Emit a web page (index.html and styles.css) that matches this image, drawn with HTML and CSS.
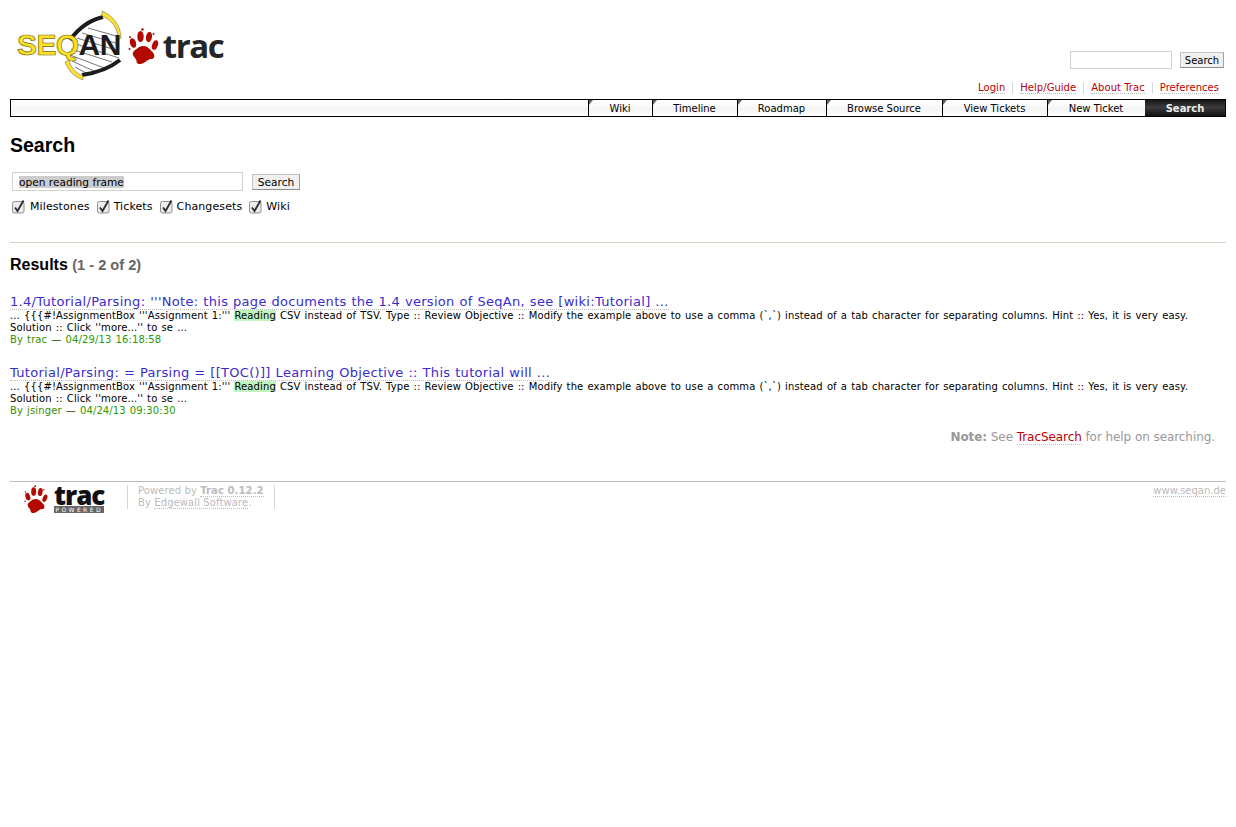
FILE: index.html
```html
<!DOCTYPE html>
<html lang="en">

<head>
    <meta charset="UTF-8">
    <meta name="viewport" content="width=device-width, initial-scale=1.0">
    <title>Search - SeqAn</title>
    <link rel="stylesheet" href="styles.css">
</head>

<body>
    <svg class="defs" width="0" height="0">
        <symbol id="paw" viewBox="0 0 30 36">
            <g fill="#b30a00">
                <path d="M15 18c4 0 6 3 9 6 3 3 2 7-1 7-3 0-4 2-8 4-4 2-7 1-7-2 0-2-2-3-3-5-2-3 0-5 3-7 2-2 4-3 7-3z"/>
                <ellipse cx="4.500" cy="15" rx="3" ry="5" transform="rotate(-18 4.500 15)"/>
                <ellipse cx="12" cy="8.500" rx="3.200" ry="5.500"/>
                <ellipse cx="20.500" cy="9" rx="3" ry="5.200" transform="rotate(10 20.500 9)"/>
                <ellipse cx="26.500" cy="17" rx="2.800" ry="5" transform="rotate(20 26.500 17)"/>
                <circle cx="14" cy="1.500" r="1.200"/>
                <circle cx="25" cy="6" r="1"/>
                <circle cx="1.500" cy="9" r="1"/>
                <circle cx="1" cy="21" r="1"/>
            </g>
        </symbol>
        <symbol id="tick" viewBox="0 0 14 15">
            <rect x="0.500" y="2.500" width="11.500" height="11.500" rx="2" fill="#ececec" stroke="#8f8f8f"/>
            <path d="M3 8.500l2.500 3.500L11.500 1.500" fill="none" stroke="#2b2b2b" stroke-width="1.800"/>
        </symbol>
    </svg>

    <div class="banner">
        <a class="logo" href="#">
            <svg class="logo-helix" width="62" height="72" viewBox="0 0 62 72">
                <path d="M8 30C16 19 28 10 41 7L58 28 58 50C48 58 34 63 20 65 12 56 8 44 8 30z" fill="#fff"/>
                <path d="M26 18L54 26M20 23L57 34M15 28L57 41M11 33L57 48M9 39L50 52M8 45L42 58M10 51L34 62M13 57L26 64" stroke="#777" stroke-width="1"/>
                <path d="M8 30C16 19 28 10 41 7" fill="none" stroke="#1c1c1c" stroke-width="4"/>
                <path d="M58 50C48 58 34 63 20 65" fill="none" stroke="#1c1c1c" stroke-width="4"/>
                <path d="M40 1c10 4 19 14 19 27l-3 2C56 18 50 10 40 6z" fill="#fde02a" stroke="#777" stroke-width="0.600"/>
                <path d="M3 52c3 8 9 15 18 18l0-4C14 63 9 58 7 50z" fill="#fde02a" stroke="#777" stroke-width="0.600"/>
            </svg>
            <span class="logo-seq">SEQ</span><span class="logo-an">AN</span>
            <svg class="logo-paw" width="31" height="36"><use href="#paw"/></svg>
            <span class="logo-trac">trac</span>
        </a>
        <div class="banner-right">
            <form class="top-search">
                <input type="text" class="top-input">
                <button type="button" class="btn btn-top">Search</button>
            </form>
            <ul class="metanav">
                <li><a href="#">Login</a></li>
                <li><a href="#">Help/Guide</a></li>
                <li><a href="#">About Trac</a></li>
                <li><a href="#">Preferences</a></li>
            </ul>
        </div>
    </div>

    <ul class="mainnav">
        <li class="w-wiki"><a href="#">Wiki</a></li>
        <li class="w-timeline"><a href="#">Timeline</a></li>
        <li class="w-roadmap"><a href="#">Roadmap</a></li>
        <li class="w-browse"><a href="#">Browse Source</a></li>
        <li class="w-view"><a href="#">View Tickets</a></li>
        <li class="w-new"><a href="#">New Ticket</a></li>
        <li class="w-search active"><a href="#">Search</a></li>
    </ul>

    <h1>Search</h1>

    <form class="search-form">
        <div class="query-row">
            <div class="query-box"><span class="query-sel">open reading frame</span></div>
            <button type="button" class="btn btn-form">Search</button>
        </div>
        <div class="filters">
            <label><svg class="tick" width="14" height="15"><use href="#tick"/></svg>Milestones</label>
            <label><svg class="tick" width="14" height="15"><use href="#tick"/></svg>Tickets</label>
            <label><svg class="tick" width="14" height="15"><use href="#tick"/></svg>Changesets</label>
            <label><svg class="tick" width="14" height="15"><use href="#tick"/></svg>Wiki</label>
        </div>
    </form>

    <hr class="rule">

    <h2>Results <span class="numresults">(1 - 2 of 2)</span></h2>

    <dl class="results">
        <dt><a href="#">1.4/Tutorial/Parsing: '''Note: this page documents the 1.4 version of SeqAn, see [wiki:Tutorial] ...</a></dt>
        <dd class="excerpt">... {{{#!AssignmentBox '''Assignment 1:''' <span class="match">Reading</span> CSV instead of TSV. Type :: Review Objective :: Modify the example above to use a comma (`,`) instead of a tab character for separating columns. Hint :: Yes, it is very easy.<br>Solution :: Click ''more...'' to se ...</dd>
        <dd class="meta">By trac <span class="dash">—</span> <span class="date">04/29/13 16:18:58</span></dd>

        <dt><a href="#">Tutorial/Parsing: = Parsing = [[TOC()]] Learning Objective :: This tutorial will ...</a></dt>
        <dd class="excerpt">... {{{#!AssignmentBox '''Assignment 1:''' <span class="match">Reading</span> CSV instead of TSV. Type :: Review Objective :: Modify the example above to use a comma (`,`) instead of a tab character for separating columns. Hint :: Yes, it is very easy.<br>Solution :: Click ''more...'' to se ...</dd>
        <dd class="meta">By jsinger <span class="dash">—</span> <span class="date">04/24/13 09:30:30</span></dd>
    </dl>

    <p class="help"><strong>Note:</strong> See <a href="#">TracSearch</a> for help on searching.</p>

    <div class="footer">
        <a class="footer-logo" href="#">
            <svg class="footer-paw" width="24" height="28"><use href="#paw"/></svg>
            <span class="footer-mark">
                <span class="footer-trac">trac</span>
                <span class="footer-powered">POWERED</span>
            </span>
        </a>
        <p class="powered">Powered by <a href="#"><strong>Trac 0.12.2</strong></a><br>By <a href="#">Edgewall Software</a>.</p>
        <p class="site"><a href="#">www.seqan.de</a></p>
    </div>
</body>

</html>
```

FILE: styles.css
```css
body {
    margin: 0;
    padding: 0 10px;
    background: #fff;
    color: #000;
    font-family: "DejaVu Sans", Verdana, sans-serif;
    font-size: 11px;
}

a {
    text-decoration: none;
}

.defs {
    display: block;
    height: 0;
}

/* banner */
.banner {
    display: flex;
    justify-content: space-between;
    height: 99px;
}

.logo {
    position: relative;
    display: flex;
    align-items: center;
    height: 70px;
    margin: 10px 0 0 7px;
    font-family: "Liberation Sans", Arial, sans-serif;
}

.logo-helix {
    position: absolute;
    left: 45px;
    top: 0;
}

.logo-seq,
.logo-an {
    position: relative;
    font-size: 30px;
    font-weight: bold;
    letter-spacing: -0.600px;
}

.logo-seq {
    color: #fde02a;
    -webkit-text-stroke: 0.700px #77700a;
}

.logo-an {
    color: #1c1c1c;
}

.logo-paw {
    position: relative;
    margin-left: 7px;
    top: 1px;
}

.logo-trac {
    margin-left: 4px;
    color: #262626;
    font-family: "Open Sans", sans-serif;
    font-size: 33px;
    font-weight: 700;
    letter-spacing: -1.400px;
}

.banner-right {
    display: flex;
    flex-direction: column;
    align-items: flex-end;
    padding-top: 51px;
}

.top-search {
    display: flex;
    align-items: center;
    gap: 8px;
    margin-right: 2px;
}

.top-input {
    box-sizing: border-box;
    width: 102px;
    height: 18px;
    border: 1px solid #d2d2d2;
    background: #fff;
    padding: 0;
}

.btn {
    box-sizing: border-box;
    height: 16px;
    padding: 0;
    border: 1px solid #c4c4c4;
    border-bottom-color: #8f8f8f;
    border-right-color: #9f9f9f;
    background: #f0f0f0;
    color: #000;
    font-family: "DejaVu Sans", Verdana, sans-serif;
}

.btn-top {
    width: 44px;
    font-size: 10px;
}

.btn-form {
    width: 48px;
    padding-top: 1px;
    font-size: 10.600px;
}

.metanav {
    display: flex;
    margin: 13px 0 0;
    padding: 0;
    list-style: none;
    font-size: 10px;
    line-height: 12px;
    letter-spacing: 0.040px;
}

.metanav li {
    padding: 0 7px;
    border-left: 1px solid #d7d7d7;
}

.metanav li:first-child {
    border-left: none;
}

.metanav a {
    color: #b00;
    border-bottom: 1px dotted #bbb;
}

/* main navigation */
.mainnav {
    display: flex;
    justify-content: flex-end;
    box-sizing: border-box;
    height: 18px;
    margin: 0;
    padding: 0;
    list-style: none;
    border: 1px solid #000;
    background: linear-gradient(to bottom, #fff, #f5f5f5 60%, #fff);
    font-size: 10px;
    line-height: 18px;
}

.mainnav li {
    position: relative;
    box-sizing: border-box;
    padding-right: 1px;
    border-left: 1px solid #000;
    text-align: center;
}

.mainnav li::before {
    content: "";
    position: absolute;
    left: 0;
    top: 0;
    border-top: 5px solid #666;
    border-right: 4px solid transparent;
}

.mainnav a {
    color: #000;
}

.w-wiki { width: 64px; }
.w-timeline { width: 85px; }
.w-roadmap { width: 89px; }
.w-browse { width: 116px; }
.w-view { width: 105px; }
.w-new { width: 98px; }
.w-search { width: 80px; }

.mainnav .active {
    padding-right: 0;
    border-left: none;
    background: linear-gradient(to bottom, #161616, #3c3c3c 45%, #111);
}

.mainnav .active::before {
    display: none;
}

.mainnav .active a {
    color: #eee;
    font-weight: bold;
}

/* search form */
h1 {
    margin: 17px 0 0;
    font-family: "Liberation Sans", Arial, sans-serif;
    font-size: 19.500px;
    line-height: 23px;
}

.search-form {
    margin: 15px 0 0 2px;
}

.query-row {
    display: flex;
    align-items: center;
    gap: 9px;
}

.query-box {
    box-sizing: border-box;
    width: 231px;
    height: 19px;
    padding-left: 6px;
    border: 1px solid #d2d2d2;
    font-size: 10.600px;
    line-height: 19px;
}

.query-sel {
    background: #ccc;
}

.filters {
    display: flex;
    gap: 7px;
    margin-top: 8px;
    line-height: 15px;
    letter-spacing: 0.100px;
}

.filters label {
    display: flex;
    align-items: center;
    gap: 3px;
}

.filters label:first-child {
    gap: 4px;
}

.tick {
    display: block;
}

.rule {
    height: 1px;
    margin: 28px 0 0;
    border: none;
    background: #d7d2c4;
}

h2 {
    margin: 13px 0 0;
    font-family: "Liberation Sans", Arial, sans-serif;
    font-size: 16px;
    line-height: 18px;
}

.numresults {
    color: #666;
    font-size: 14.600px;
}

/* results */
.results {
    margin: 20px 0 0;
}

.results dt {
    margin-top: 19px;
    font-size: 13px;
    line-height: 16px;
    letter-spacing: 0.300px;
    word-spacing: 0.400px;
}

.results dt:first-child {
    margin-top: 0;
}

.results dt a {
    color: #3a2ccc;
    border-bottom: 1px dotted #bbb;
}

.results dd {
    margin: 0;
    font-size: 10px;
    line-height: 12px;
    letter-spacing: 0.115px;
    word-spacing: 0.800px;
}

.match {
    background: #c0f5c0;
}

.meta {
    color: #3c8c00;
}

.dash {
    color: #1c4c00;
}

.date {
    color: #2a9a00;
}

.help {
    margin: 13px 11px 0 0;
    color: #999;
    font-size: 12px;
    line-height: 14px;
    letter-spacing: -0.070px;
    text-align: right;
}

.help a {
    color: #b00;
    border-bottom: 1px dotted #bbb;
}

/* footer */
.footer {
    display: flex;
    align-items: flex-start;
    margin-top: 37px;
    border-top: 1px solid #bbb;
    padding-top: 3px;
    color: #bbb;
    font-size: 10px;
    line-height: 12px;
}

.footer a {
    color: #bbb;
    border-bottom: 1px dotted #bbb;
}

.footer .footer-logo {
    display: flex;
    align-items: center;
    width: 103px;
    height: 28px;
    margin-left: 14px;
    border: none;
}

.footer-mark {
    display: flex;
    flex-direction: column;
    align-items: stretch;
    margin-left: 6px;
}

.footer-trac {
    color: #111;
    font-family: "Open Sans", sans-serif;
    font-size: 26px;
    font-weight: 800;
    line-height: 21px;
    letter-spacing: -1px;
}

.footer-powered {
    background: #666;
    color: #fff;
    font-size: 6px;
    line-height: 7px;
    letter-spacing: 2.400px;
    text-align: center;
}

.powered {
    margin: 0;
    padding: 0 10px;
    height: 24px;
    border-left: 1px solid #d7d7d7;
    border-right: 1px solid #d7d7d7;
    letter-spacing: 0.100px;
}

.site {
    margin: 0 0 0 auto;
}
```
